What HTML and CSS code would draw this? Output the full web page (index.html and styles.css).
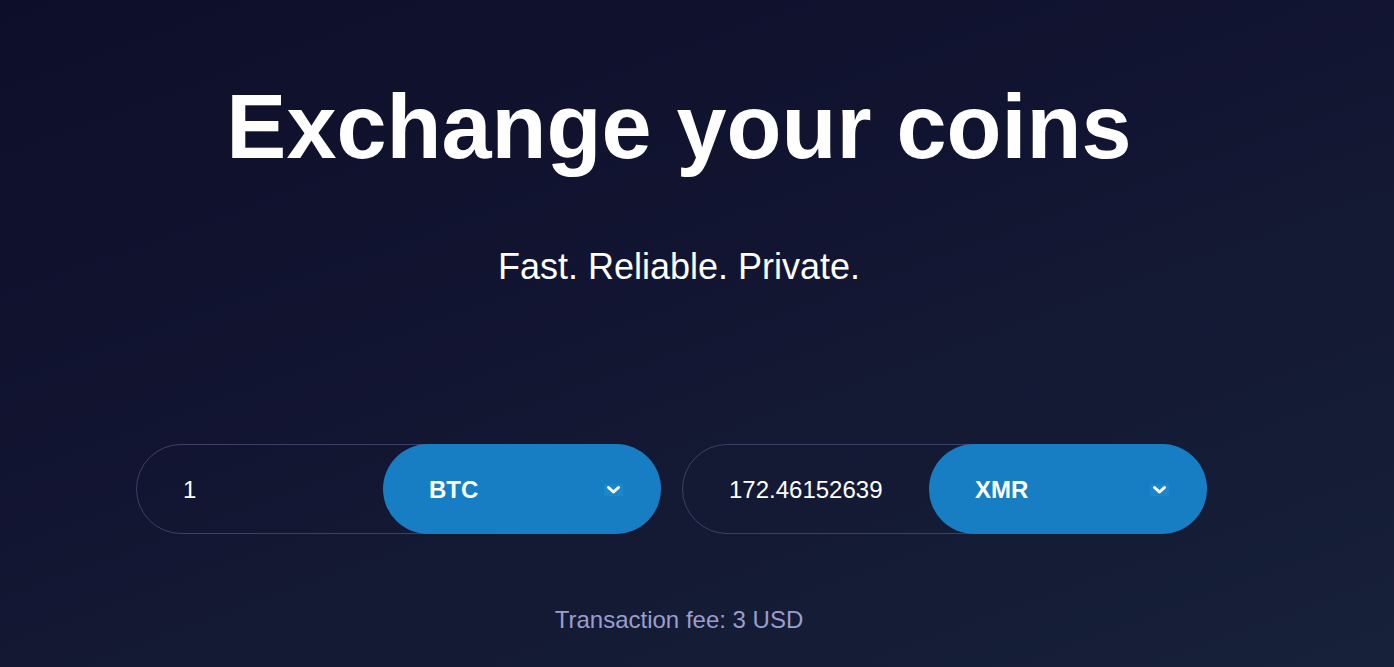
FILE: index.html
```html
<!DOCTYPE html>
<html lang="en">
<head>
    <meta charset="UTF-8">
    <meta name="viewport" content="width=device-width, initial-scale=1.0">
    <title>Exchange your coins</title>
    <link rel="stylesheet" href="styles.css">
</head>
<body>
    <main class="hero">
        <h1 class="hero-title">Exchange your coins</h1>
        <p class="hero-tagline">Fast. Reliable. Private.</p>

        <form class="exchange">
            <div class="exchange-field">
                <input class="amount" type="text" value="1">
                <div class="coin-select">
                    <span>BTC</span>
                    <svg class="chevron" width="19" height="12" viewBox="0 0 19 12">
                        <rect width="19" height="12" fill="#1c86cd"/>
                        <path d="M4.5 3.5 L9.5 8 L14.5 3.5" fill="none" stroke="#fff" stroke-width="3" stroke-linecap="round" stroke-linejoin="round"/>
                    </svg>
                </div>
            </div>
            <div class="exchange-field">
                <input class="amount" type="text" value="172.46152639">
                <div class="coin-select">
                    <span>XMR</span>
                    <svg class="chevron" width="19" height="12" viewBox="0 0 19 12">
                        <rect width="19" height="12" fill="#1c86cd"/>
                        <path d="M4.5 3.5 L9.5 8 L14.5 3.5" fill="none" stroke="#fff" stroke-width="3" stroke-linecap="round" stroke-linejoin="round"/>
                    </svg>
                </div>
            </div>
        </form>

        <p class="fee">Transaction fee: 3 USD</p>
    </main>
</body>
</html>
```

FILE: styles.css
```css
body {
    font-family: "Liberation Sans", Arial, sans-serif;
    margin: 0;
    padding: 0;
    height: 667px;
    overflow: hidden;
    color: white;
    background: linear-gradient(160deg, #0d0e2a 0%, #121531 45%, #172139 100%);
}
.hero {
    width: 1358px;
    text-align: center;
}
.hero-title {
    margin: 75px 0 0;
    font-size: 90px;
    line-height: 104px;
    font-weight: bold;
}
.hero-tagline {
    margin: 67px 0 0;
    font-size: 36px;
    line-height: 42px;
}
.exchange {
    display: flex;
    gap: 21px;
    margin-top: 156px;
    padding-left: 136px;
}
.exchange-field {
    display: flex;
    width: 525px;
    height: 90px;
    box-sizing: border-box;
    border: 1px solid #3e3f66;
    border-radius: 45px;
}
.amount {
    flex: 1;
    min-width: 0;
    padding: 2px 0 0 46px;
    border: none;
    background: transparent;
    color: white;
    font-family: inherit;
    font-size: 24px;
    outline: none;
}
.coin-select {
    display: flex;
    align-items: center;
    justify-content: space-between;
    width: 278px;
    height: 90px;
    margin: -1px -1px -1px 0;
    padding: 2px 38px 0 46px;
    box-sizing: border-box;
    border-radius: 45px;
    background-color: #177ec4;
    font-size: 24px;
    font-weight: bold;
    cursor: pointer;
}
.fee {
    margin: 72px 0 0;
    font-size: 24px;
    line-height: 28px;
    color: #9a9ece;
}
```
